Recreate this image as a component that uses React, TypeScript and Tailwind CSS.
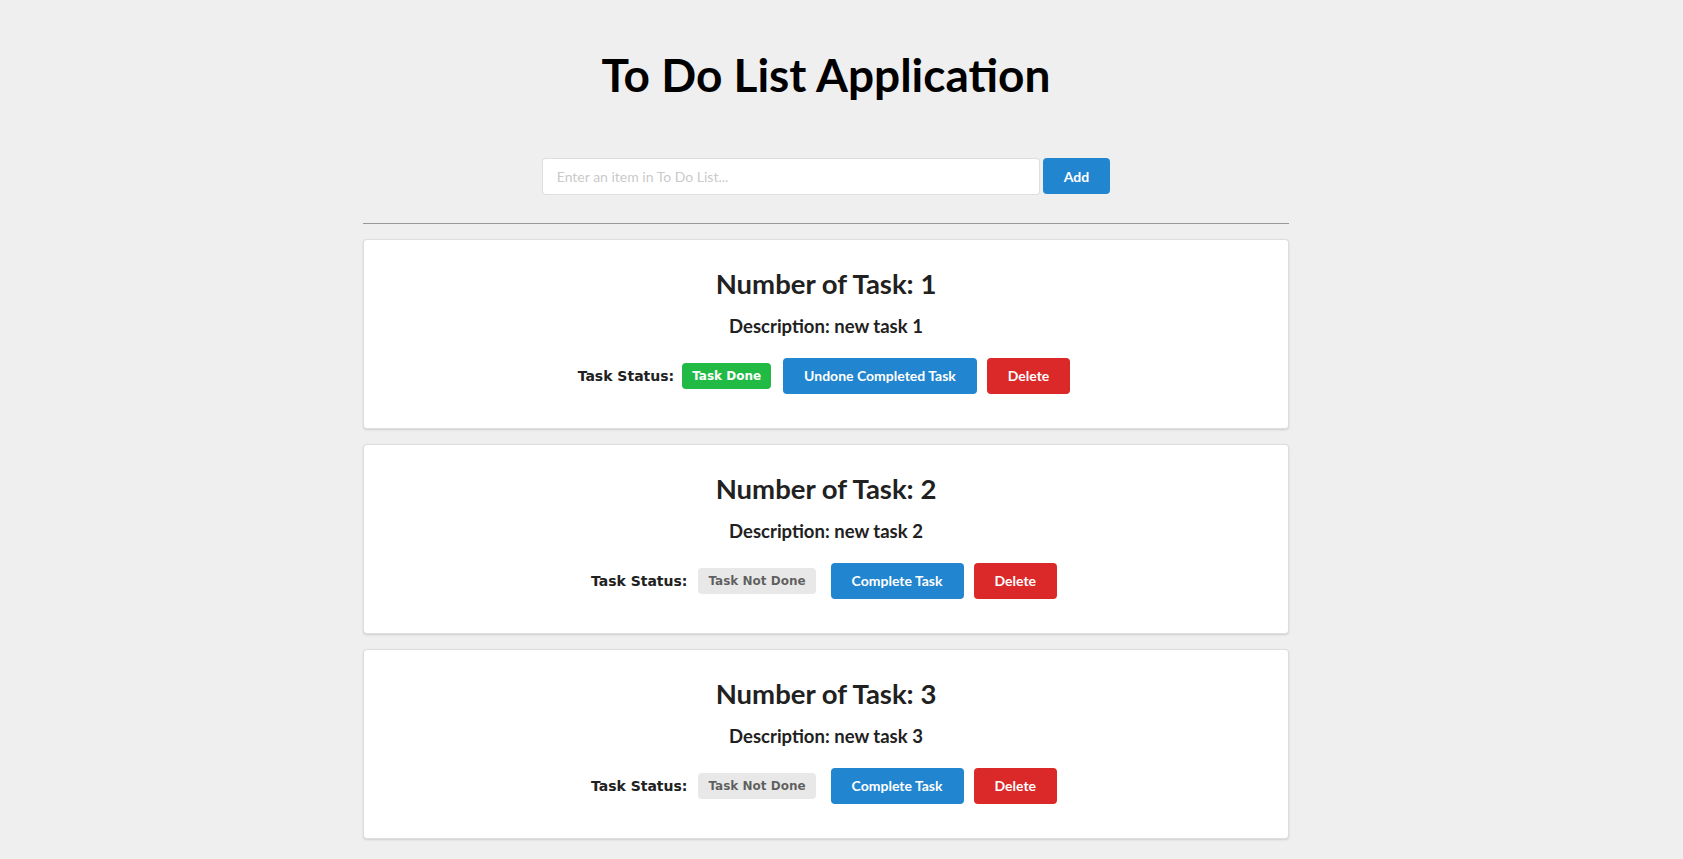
const tasks = [
  { id: 1, description: "new task 1", done: true },
  { id: 2, description: "new task 2", done: false },
  { id: 3, description: "new task 3", done: false },
];

const TaskCard = ({ id, description, done }: { id: number; description: string; done: boolean }) => {
  return (
    <div className="bg-white border border-[rgba(34,36,38,0.15)] rounded-[4px] shadow-[0_1px_2px_0_rgba(34,36,38,0.15)] pt-[28px] pb-[34px] text-center text-[#212121]">
      <h3 className="text-[27.5px] leading-[32px] font-bold">Number of Task: {id}</h3>
      <h4 className="mt-[14px] text-[18.5px] leading-[24px] font-bold">Description: {description}</h4>
      <div className="mt-[20px] flex items-center justify-center">
        <span className="font-['DejaVu_Sans',sans-serif] text-[14px] font-bold">Task Status:</span>
        {done ? (
          <span className="ml-2 rounded-[4px] bg-[#21ba45] px-[10px] py-[7px] font-['DejaVu_Sans',sans-serif] text-[12px] leading-none font-bold text-white">
            Task Done
          </span>
        ) : (
          <span className="ml-[11px] mr-[3px] rounded-[4px] bg-[#e8e8e8] px-[10px] py-[7px] font-['DejaVu_Sans',sans-serif] text-[12px] leading-none font-bold text-[rgba(0,0,0,0.6)]">
            Task Not Done
          </span>
        )}
        <button className="ml-3 rounded-[4px] bg-[#2185d0] px-[21px] py-[11px] text-[14px] leading-[14px] font-bold text-white">
          {done ? "Undone Completed Task" : "Complete Task"}
        </button>
        <button className="ml-2.5 mr-1 rounded-[4px] bg-[#db2828] px-[21px] py-[11px] text-[14px] leading-[14px] font-bold text-white">
          Delete
        </button>
      </div>
    </div>
  );
};

const App = () => {
  return (
    <div className="min-h-screen bg-[#efefef] pr-[31px] font-['Lato',sans-serif]">
      <div className="mx-auto w-[926px]">
        <h1 className="pt-[46px] text-center text-[46px] leading-[58px] font-bold text-black">To Do List Application</h1>
        <div className="mt-[54px] flex justify-center">
          <input
            type="text"
            placeholder="Enter an item in To Do List..."
            className="h-[37px] w-[498px] rounded-[4px] border border-[rgba(34,36,38,0.15)] bg-white px-[14px] text-[14px] outline-none placeholder:text-[rgba(191,191,191,0.87)]"
          />
          <button className="ml-[3px] h-[36px] rounded-[4px] bg-[#2185d0] px-[21px] text-[14px] font-bold text-white">
            Add
          </button>
        </div>
        <hr className="mt-[28px] border-t border-[#999]" />
        <div className="mt-[15px] flex flex-col gap-[15px] pb-4">
          {tasks.map((t) => (
            <TaskCard key={t.id} {...t} />
          ))}
        </div>
      </div>
    </div>
  );
};

export default App;
